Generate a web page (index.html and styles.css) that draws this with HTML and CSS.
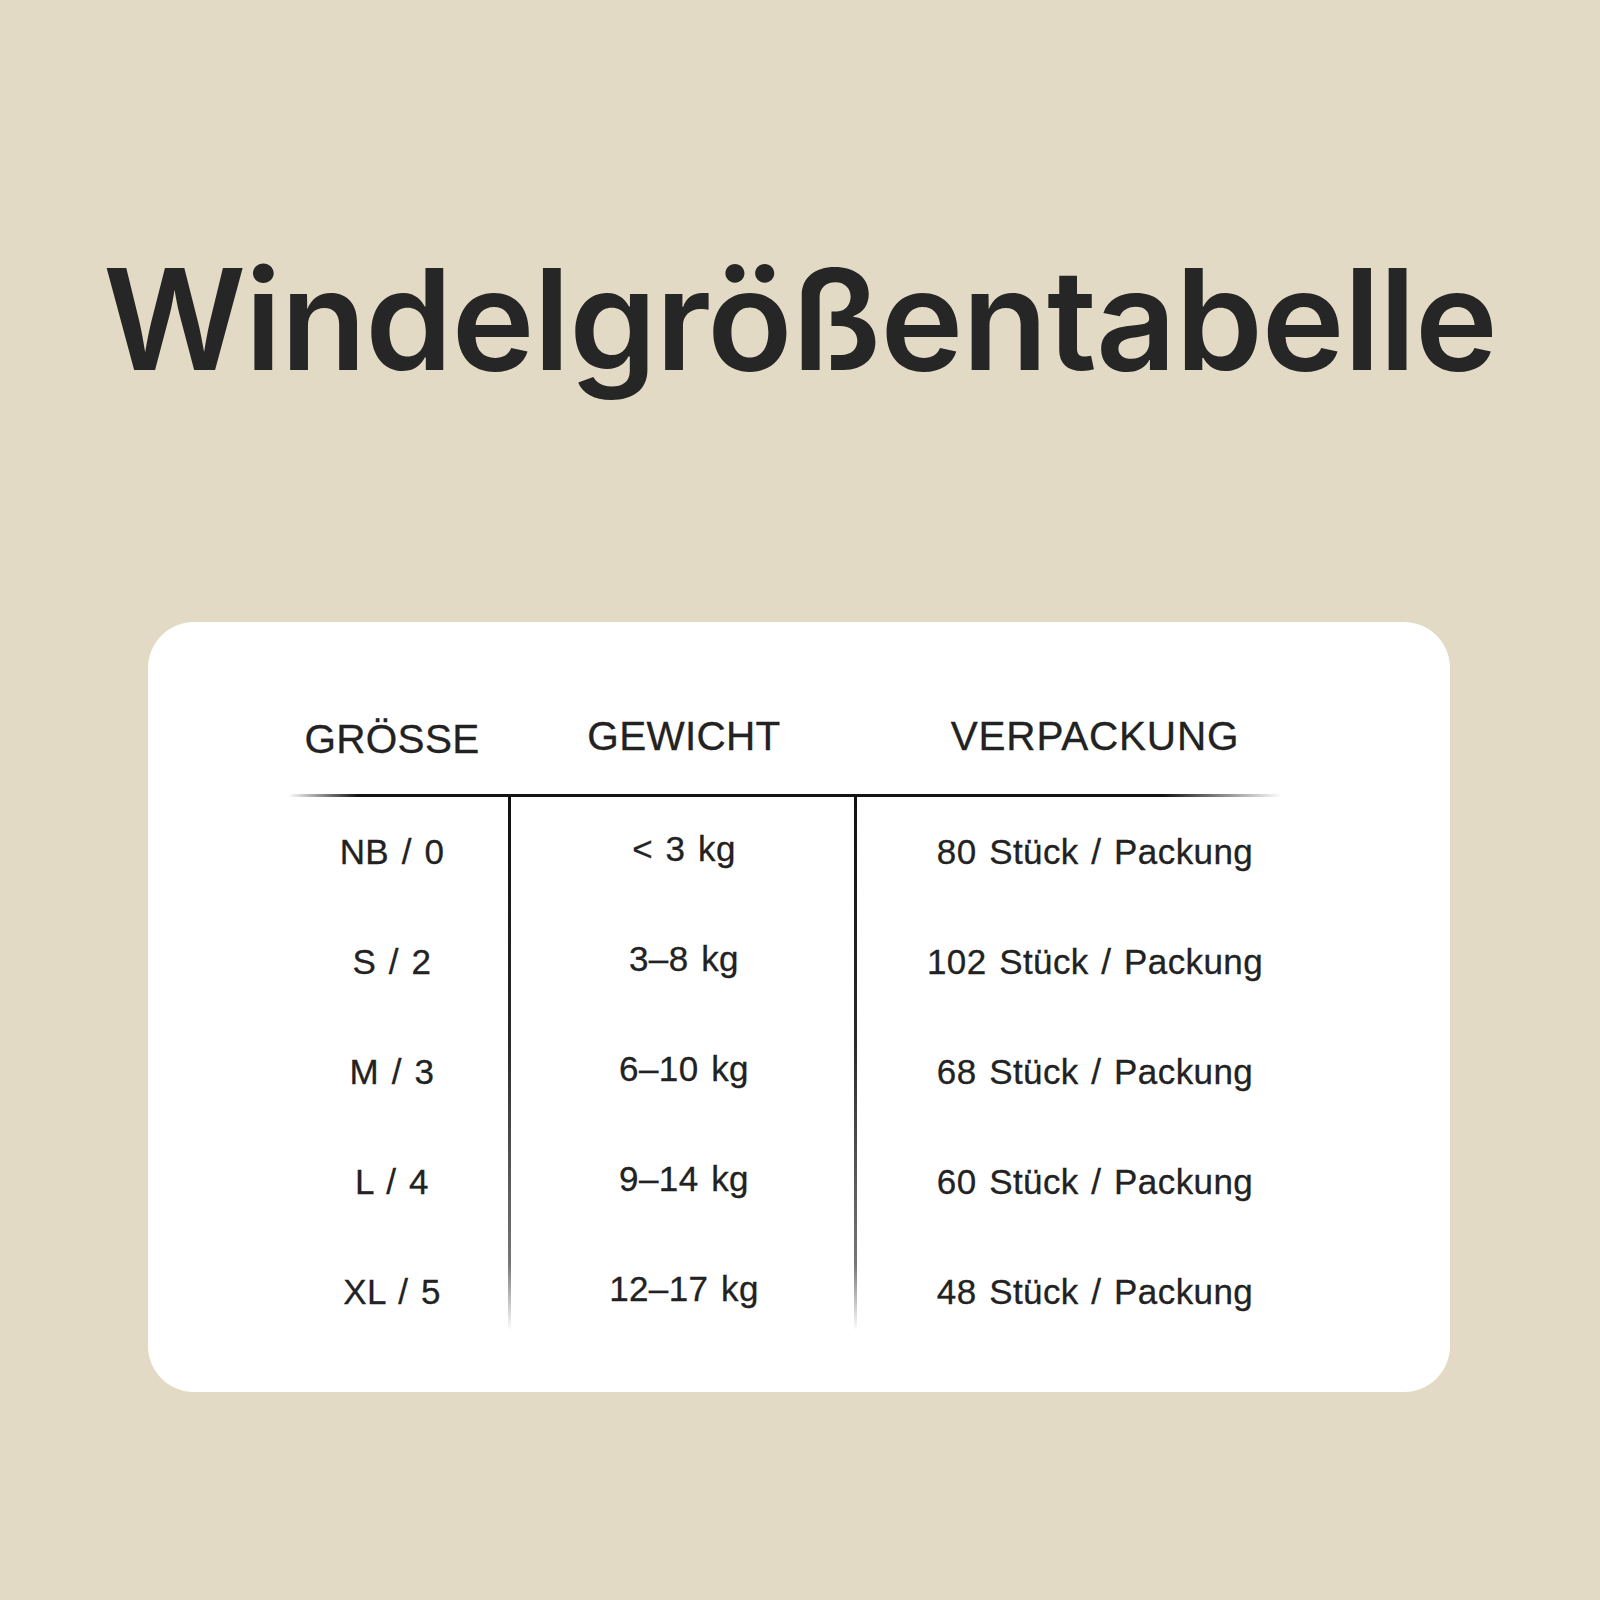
FILE: index.html
```html
<!DOCTYPE html>
<html lang="de">
<head>
<meta charset="utf-8">
<title>Windelgrößentabelle</title>
<link rel="stylesheet" href="styles.css">
</head>
<body>
<main class="page">
  <h1 class="title">Windelgrößentabelle</h1>
  <section class="card">
    <div class="table">
      <div class="head head-size">GRÖSSE</div>
      <div class="head head-weight">GEWICHT</div>
      <div class="head head-pack">VERPACKUNG</div>
      <div class="rule"></div>
      <div class="col col-size">
        <div class="cell">NB / 0</div>
        <div class="cell">S / 2</div>
        <div class="cell">M / 3</div>
        <div class="cell">L / 4</div>
        <div class="cell">XL / 5</div>
      </div>
      <div class="col col-weight">
        <div class="cell">&lt; 3 kg</div>
        <div class="cell">3–8 kg</div>
        <div class="cell">6–10 kg</div>
        <div class="cell">9–14 kg</div>
        <div class="cell">12–17 kg</div>
      </div>
      <div class="col col-pack">
        <div class="cell">80 Stück / Packung</div>
        <div class="cell">102 Stück / Packung</div>
        <div class="cell">68 Stück / Packung</div>
        <div class="cell">60 Stück / Packung</div>
        <div class="cell">48 Stück / Packung</div>
      </div>
    </div>
  </section>
</main>
</body>
</html>
```

FILE: styles.css
```css
html, body {
  margin: 0;
  padding: 0;
  background: #e2dac4;
}

.page {
  width: 1600px;
  height: 1600px;
  box-sizing: border-box;
  padding-top: 249px;
  color: #262626;
}

.title {
  margin: 0;
  font-family: "Inter", "Liberation Sans", sans-serif;
  font-weight: 600;
  font-size: 140px;
  line-height: 1;
  text-align: center;
  letter-spacing: -1px;
  color: #262626;
}

.card {
  margin: 233px 0 0 148px;
  width: 1302px;
  height: 770px;
  box-sizing: border-box;
  background: #ffffff;
  border-radius: 46px;
  padding: 91px 0 0 140px;
}

.table {
  width: 994px;
  display: grid;
  grid-template-columns: 223px 346px 425px;
  font-family: "Liberation Sans", Arial, sans-serif;
  color: #222;
  -webkit-text-stroke: 0.3px #222;
}

.head {
  font-size: 40.5px;
  line-height: 46px;
  letter-spacing: 0.3px;
  text-align: center;
  padding-bottom: 35px;
}

.head-size { padding-right: 15px; padding-top: 3px; padding-bottom: 32px; }
.head-pack { padding-left: 51px; letter-spacing: 0.8px; }

.rule {
  grid-column: 1 / -1;
  height: 3px;
  background: linear-gradient(to right, rgba(20,20,20,0) 0%, #141414 7%, #141414 88%, rgba(20,20,20,0) 100%);
}

.col {
  display: flex;
  flex-direction: column;
}

.col-size,
.col-weight {
  background-image: linear-gradient(to bottom, #111 0%, #2a2a2a 45%, #777 85%, rgba(136,136,136,0) 97%);
  background-repeat: no-repeat;
  background-size: 3px 100%;
  background-position: right top;
}

.cell {
  height: 110px;
  line-height: 110px;
  font-size: 35px;
  letter-spacing: 0.4px;
  word-spacing: 2.5px;
  text-align: center;
  white-space: nowrap;
}

.col-size .cell { padding-right: 15px; }
.col-weight .cell { line-height: 104px; padding-bottom: 6px; box-sizing: border-box; height: 110px; }
.col-pack .cell { padding-left: 51px; }
```
